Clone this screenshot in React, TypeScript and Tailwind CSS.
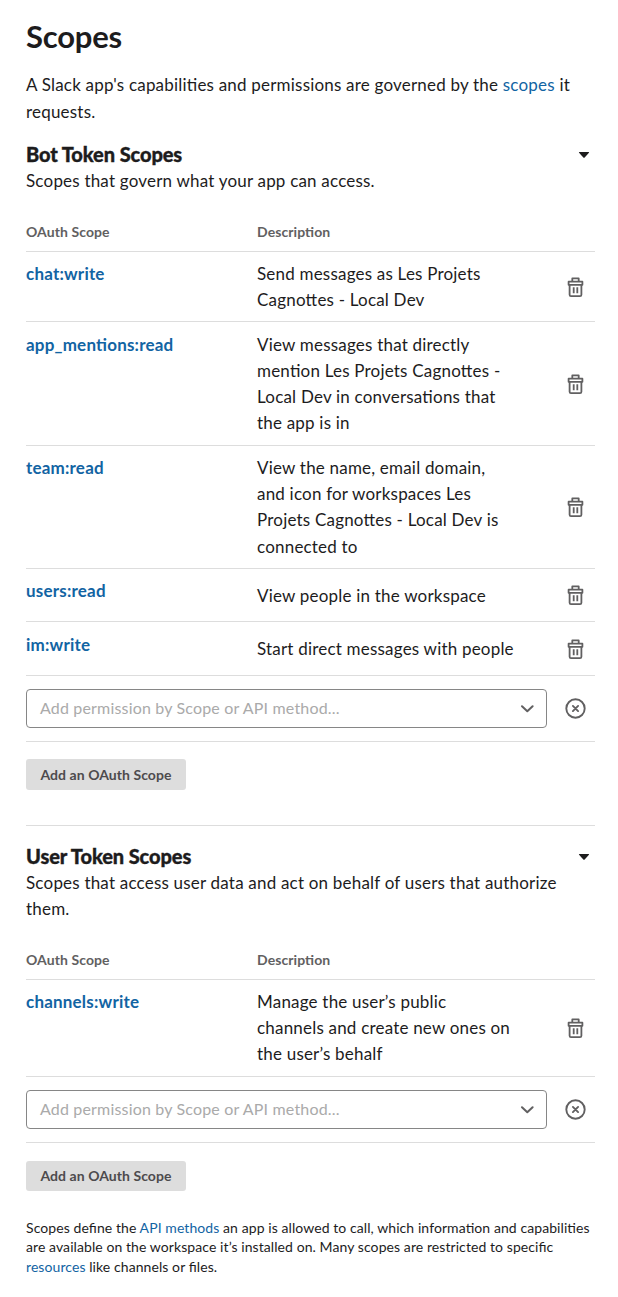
import React from "react";

function Trash() {
  return (
    <svg width="20" height="22" viewBox="0 0 20 22" fill="none" stroke="#616061" strokeWidth="1.8" strokeLinejoin="round">
      <path d="M2.6 5.7h13.8v3.1H2.6zM6.3 5.5V2.4h6.4v3.1M3.6 8.8v9.9q0 1.4 1.4 1.4h9q1.4 0 1.4-1.4V8.8" />
      <path d="M7.7 11.2v6M11.3 11.2v6" />
    </svg>
  );
}

function Row({ scope, h, st, pt, lines }: { scope: string; h: string; st: string; pt: string; lines: string[] }) {
  return (
    <div className={`flex border-b border-[#ddd] ${h}`}>
      <div className={`w-[231px] font-bold text-[#1264a3] ${st}`}>{scope}</div>
      <div className={`w-[300px] whitespace-nowrap ${pt}`}>
        {lines.map((l) => <div key={l}>{l}</div>)}
      </div>
      <div className="flex w-[37px] items-center justify-center"><Trash /></div>
    </div>
  );
}

function Head() {
  return (
    <div className="flex h-[39px] border-b border-[#ddd] pt-[8px] text-[14px] leading-[22px] font-bold tracking-[0.08px] text-[#616061]">
      <div className="w-[231px]">OAuth Scope</div>
      <div>Description</div>
    </div>
  );
}

function Picker() {
  return (
    <div className="flex h-[66px] items-center border-b border-[#ddd]">
      <div className="flex h-[39px] w-[521px] items-center justify-between rounded-[4px] border border-[#868686] pr-[12px] pl-[13px] text-[16px] tracking-[0.17px] text-[#aaa]">
        <span className="pb-px">Add permission by Scope or API method...</span>
        <svg width="14" height="10" viewBox="0 0 14 10" fill="none" stroke="#616061" strokeWidth="2" strokeLinecap="round" strokeLinejoin="round"><path d="M2 2.3l5.3 5 5.3-5" /></svg>
      </div>
      <svg className="ml-[18px]" width="22" height="22" viewBox="0 0 22 22" fill="none" stroke="#616061" strokeWidth="1.9" strokeLinecap="round"><circle cx="10.5" cy="10.5" r="9.2" /><path d="M7.9 7.9l5.2 5.2M13.1 7.9l-5.2 5.2" /></svg>
    </div>
  );
}

function Title({ children }: { children: string }) {
  return (
    <div className="flex h-[26px] items-center justify-between pr-[5px] text-[20px] leading-[26px] font-black tracking-[-0.1px]">
      <h2 className="-mt-[2px] [-webkit-text-stroke:0.35px_#1d1c1d]">{children}</h2>
      <svg className="-mt-px" width="12" height="8" viewBox="0 0 12 8" fill="#1d1c1d"><path d="M1.5 1h9q1 0 .4.8L6.7 6.5q-.7.7-1.4 0L1.1 1.8Q.5 1 1.5 1z" /></svg>
    </div>
  );
}

function AddButton({ size }: { size: string }) {
  return <button className={`block w-[160px] rounded-[3px] bg-[#ddd] text-[14px] font-bold tracking-[0.06px] text-[#4d4b4d] ${size}`}>Add an OAuth Scope</button>;
}

export default function App() {
  return (
    <main className="h-[1297px] w-[618px] bg-white pt-[18px] pl-[26px] font-['Lato',sans-serif] text-[17px] leading-[26.2px] tracking-[0.2px] text-[#1d1c1d] [font-feature-settings:'liga'_1,'clig'_1]">
      <div className="w-[569px]">
        <h1 className="h-[53px] text-[31px] leading-[37px] font-bold tracking-[-0.2px]">Scopes</h1>
        <p className="h-[71px] leading-[27px]">A Slack app's capabilities and permissions are governed by the <span className="text-[#1264a3]">scopes</span> it requests.</p>
        <Title>Bot Token Scopes</Title>
        <p className="h-[45px]">Scopes that govern what your app can access.</p>
        <Head />
        <Row scope="chat:write" h="h-[70px]" st="pt-[9px]" pt="pt-[9px]" lines={["Send messages as Les Projets", "Cagnottes - Local Dev"]} />
        <Row scope="app_mentions:read" h="h-[124px]" st="pt-[10px]" pt="pt-[9.7px]" lines={["View messages that directly", "mention Les Projets Cagnottes -", "Local Dev in conversations that", "the app is in"]} />
        <Row scope="team:read" h="h-[123px]" st="pt-[9px]" pt="pt-[9px]" lines={["View the name, email domain,", "and icon for workspaces Les", "Projets Cagnottes - Local Dev is", "connected to"]} />
        <Row scope="users:read" h="h-[53px]" st="pt-[9px]" pt="pt-[14px]" lines={["View people in the workspace"]} />
        <Row scope="im:write" h="h-[54px]" st="pt-[10px]" pt="pt-[14px]" lines={["Start direct messages with people"]} />
        <Picker />
        <div className="h-[84px] border-b border-[#ddd] pt-[17px]"><AddButton size="h-[31px] pt-px" /></div>
        <div className="pt-[18px]"><Title>User Token Scopes</Title></div>
        <p className="h-[71px]">Scopes that access user data and act on behalf of users that authorize them.</p>
        <Head />
        <Row scope="channels:write" h="h-[97px]" st="pt-[9px]" pt="pt-[9px]" lines={["Manage the user’s public", "channels and create new ones on", "the user’s behalf"]} />
        <Picker />
        <div className="h-[75px] pt-[18px]"><AddButton size="h-[30px]" /></div>
        <p className="text-[14px] leading-[19.4px] tracking-[0.08px] whitespace-nowrap">Scopes define the <span className="text-[#1264a3]">API methods</span> an app is allowed to call, which information and capabilities<br />are available on the workspace it’s installed on. Many scopes are restricted to specific<br /><span className="text-[#1264a3]">resources</span> like channels or files.</p>
      </div>
    </main>
  );
}
